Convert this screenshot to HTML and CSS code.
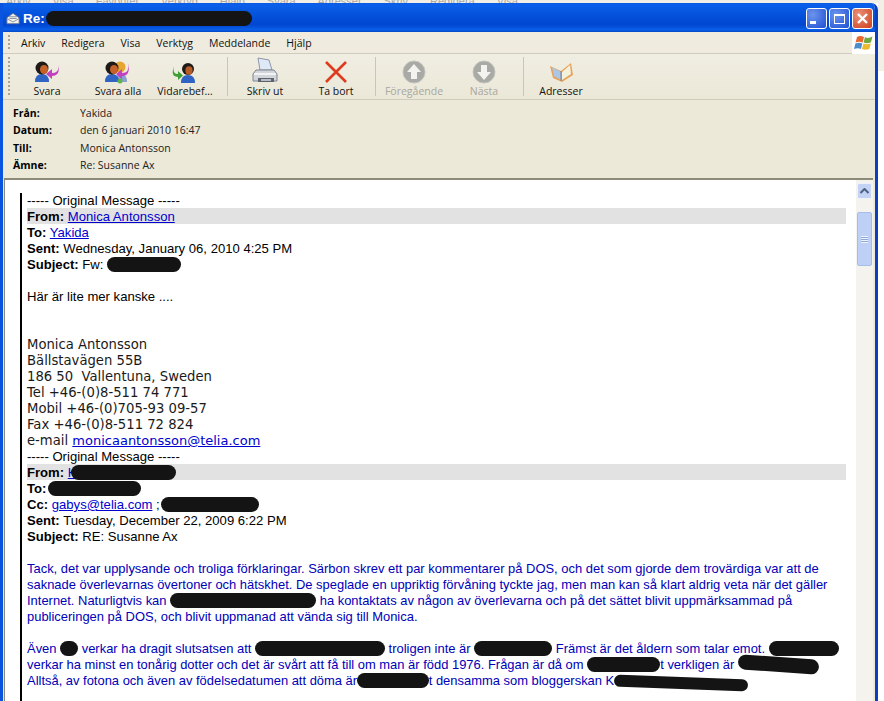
FILE: index.html
```html
<!DOCTYPE html>
<html>
<head>
    <meta charset="utf-8">
    <title>Re: Susanne Ax</title>
    <link rel="stylesheet" href="styles.css">
</head>
<body>
    <div class="behind">
        <span>Arkiv</span><span>Visa</span><span>Favoriter</span><span>Verktyg</span><span>Hjälp</span><span>Svara</span><span>Adresser</span><span>Skriv</span><span>Redigera</span><span>Visa</span>
    </div>
    <div class="behind-side"></div>
    <div class="window">
        <div class="titlebar">
            <svg class="title-icon" width="14" height="13" viewBox="0 0 16 14">
                <path d="M1 6 L8 1 L15 6 V13 H1 Z" fill="#f4f1e6" stroke="#5c6f94"/>
                <path d="M1 7 L8 11 L15 7 M3 5 H13 M4 7 H12" fill="none" stroke="#7d8aa5"/>
            </svg>
            <span class="title-text">Re:</span>
            <span class="redact title-redact"></span>
            <div class="caption-btns">
                <div class="cap cap-min"><div class="min-glyph"></div></div>
                <div class="cap cap-max"><div class="max-glyph"></div></div>
                <div class="cap cap-close">
                    <svg width="13" height="13" viewBox="0 0 13 13"><path d="M2 2 L11 11 M11 2 L2 11" stroke="#fff" stroke-width="2.4"/></svg>
                </div>
            </div>
        </div>

        <div class="menubar">
            <div class="grip"></div>
            <span class="menu-item">Arkiv</span>
            <span class="menu-item">Redigera</span>
            <span class="menu-item">Visa</span>
            <span class="menu-item">Verktyg</span>
            <span class="menu-item">Meddelande</span>
            <span class="menu-item">Hjälp</span>
            <div class="flag">
                <svg width="20" height="18" viewBox="0 0 20 18">
                    <path d="M3 3 Q6 1 10 3 L8.6 8.5 Q5 7 1.6 8.5 Z" fill="#e8672c"/>
                    <path d="M11 3 Q14 5 18.5 2.5 L17 8.2 Q13 10 9.6 8.5 Z" fill="#72a83e"/>
                    <path d="M1.4 9.5 Q5 8 8.3 9.5 L7 15 Q4 13.5 0 15 Z" fill="#4d8ccb"/>
                    <path d="M9.4 9.5 Q13 11 16.8 9.2 L15.4 15 Q11 16.5 8 15 Z" fill="#edb92e"/>
                </svg>
            </div>
        </div>

        <div class="toolbar">
            <div class="grip"></div>
            <div class="tool tool-svara">
                <svg width="26" height="24" viewBox="0 0 26 24">
                    <path d="M1 22 Q1 14 8 14 Q15 14 15 22 Z" fill="#2f63c4"/>
                    <circle cx="8" cy="8" r="6.5" fill="#1d1a18"/>
                    <ellipse cx="10" cy="9.5" rx="4" ry="4.6" fill="#c4622a"/>
                    <path d="M24 4 Q26 13 18 13 V9 L12 14 L18 19 V16 Q27 16 24 4 Z" fill="#c23fc0"/>
                </svg>
                <span>Svara</span>
            </div>
            <div class="tool tool-alla">
                <svg width="26" height="24" viewBox="0 0 26 24">
                    <circle cx="15" cy="7" r="5.5" fill="#e9a531"/>
                    <path d="M10 22 Q10 14 16 14 Q22 14 22 22 Z" fill="#8b9ed0"/>
                    <path d="M0 22 Q0 14 7 14 Q14 14 14 22 Z" fill="#2f63c4"/>
                    <circle cx="7" cy="8" r="6.5" fill="#1d1a18"/>
                    <ellipse cx="9" cy="9.5" rx="4" ry="4.6" fill="#c4622a"/>
                    <path d="M23 3 Q25 13 17 13 V9 L11 14 L17 19 V16 Q26 16 23 3 Z" fill="#c23fc0"/>
                    <circle cx="15" cy="21" r="2.5" fill="#5cb54a"/>
                </svg>
                <span>Svara alla</span>
            </div>
            <div class="tool tool-vidare">
                <svg width="26" height="24" viewBox="0 0 26 24">
                    <path d="M9 23 Q9 15 16 15 Q23 15 23 23 Z" fill="#2f63c4"/>
                    <circle cx="16" cy="9" r="6" fill="#1d1a18"/>
                    <ellipse cx="17" cy="10.5" rx="3.6" ry="4.2" fill="#b85c28"/>
                    <path d="M2 6 Q0 14 6 14 V11 L11 15.5 L6 20 V17 Q-2 17 2 6 Z" fill="#3f9e35"/>
                </svg>
                <span>Vidarebef…</span>
            </div>
            <div class="tool-sep sep-a"></div>
            <div class="tool tool-skriv">
                <svg width="26" height="27" viewBox="0 0 26 27">
                    <path d="M6 1 L17 3 L20 13 L8 13 Z" fill="#dfe8f6" stroke="#8d97a6"/>
                    <path d="M4 13 H22 L25 17 V24 H1 V17 Z" fill="#d2d5da" stroke="#808792"/>
                    <path d="M2 17 H24" stroke="#f2f3f5" stroke-width="2"/>
                    <path d="M6 21 H22 V25 H6 Z" fill="#5d6470"/>
                    <path d="M9 22 H19 V24 H9 Z" fill="#b9bdc4"/>
                </svg>
                <span>Skriv ut</span>
            </div>
            <div class="tool tool-bort">
                <svg width="24" height="24" viewBox="0 0 24 24">
                    <path d="M2 2 L22 22 M22 2 L2 22" stroke="#df3b1d" stroke-width="2.6" fill="none"/>
                </svg>
                <span>Ta bort</span>
            </div>
            <div class="tool-sep sep-b"></div>
            <div class="tool tool-prev disabled">
                <svg width="24" height="24" viewBox="0 0 24 24">
                    <circle cx="12" cy="12" r="11" fill="#a9a9a5" stroke="#c3c3bf"/>
                    <path d="M12 4 L19 12 H15 V19 H9 V12 H5 Z" fill="#f3f3ef"/>
                </svg>
                <span>Föregående</span>
            </div>
            <div class="tool tool-next disabled">
                <svg width="24" height="24" viewBox="0 0 24 24">
                    <circle cx="12" cy="12" r="11" fill="#a9a9a5" stroke="#c3c3bf"/>
                    <path d="M12 20 L19 12 H15 V5 H9 V12 H5 Z" fill="#f3f3ef"/>
                </svg>
                <span>Nästa</span>
            </div>
            <div class="tool-sep sep-c"></div>
            <div class="tool tool-adr">
                <svg width="26" height="22" viewBox="0 0 26 22">
                    <path d="M2 4 L13 9 L23 1 L25 13 L14 20 L5 16 Z" fill="#e8a25a"/>
                    <path d="M4 5 L13 10 L13 18 L6 14 Z" fill="#a9c7e6"/>
                    <path d="M14 10 L22 3 L23 12 L14 18 Z" fill="#f3f1dc"/>
                    <path d="M13 9 V19" stroke="#7e7e90"/>
                </svg>
                <span>Adresser</span>
            </div>
        </div>

        <div class="msg-head">
            <div class="head-row"><b>Från:</b><span>Yakida</span></div>
            <div class="head-row"><b>Datum:</b><span>den 6 januari 2010 16:47</span></div>
            <div class="head-row"><b>Till:</b><span>Monica Antonsson</span></div>
            <div class="head-row"><b>Ämne:</b><span>Re: Susanne Ax</span></div>
        </div>

        <div class="msg-pane">
            <div class="msg-body">
                <div class="quote">
                    <div>----- Original Message -----</div>
                    <div class="hl"><b>From:</b> <a>Monica Antonsson</a></div>
                    <div><b>To:</b> <a>Yakida</a></div>
                    <div><b>Sent:</b> Wednesday, January 06, 2010 4:25 PM</div>
                    <div><b>Subject:</b> Fw: S<span class="redact r-subject"></span></div>
                    <div class="gap"></div>
                    <div>Här är lite mer kanske ....</div>
                    <div class="gap"></div>
                    <div class="gap"></div>
                    <div class="sig">Monica Antonsson</div>
                    <div class="sig">Bällstavägen 55B</div>
                    <div class="sig">186 50&nbsp; Vallentuna, Sweden</div>
                    <div class="sig">Tel +46-(0)8-511 74 771</div>
                    <div class="sig">Mobil +46-(0)705-93 09-57</div>
                    <div class="sig">Fax +46-(0)8-511 72 824</div>
                    <div class="sig">e-mail <a>monicaantonsson@telia.com</a></div>
                    <div>----- Original Message -----</div>
                    <div class="hl"><b>From:</b> <a>K</a><span class="redact r-from"></span></div>
                    <div><b>To:</b><span class="redact r-to"></span></div>
                    <div><b>Cc:</b> <a>gabys@telia.com</a> ;<span class="redact r-cc"></span></div>
                    <div><b>Sent:</b> Tuesday, December 22, 2009 6:22 PM</div>
                    <div><b>Subject:</b> RE: Susanne Ax</div>
                    <div class="gap"></div>
                    <div class="blue">Tack, det var upplysande och troliga förklaringar. Särbon skrev ett par kommentarer på DOS, och det som gjorde dem trovärdiga var att de</div>
                    <div class="blue">saknade överlevarnas övertoner och hätskhet. De speglade en uppriktig förvåning tyckte jag, men man kan så klart aldrig veta när det gäller</div>
                    <div class="blue">Internet. Naturligtvis kan <span class="redact r-b1"></span> ha kontaktats av någon av överlevarna och på det sättet blivit uppmärksammad på</div>
                    <div class="blue">publiceringen på DOS, och blivit uppmanad att vända sig till Monica.</div>
                    <div class="gap"></div>
                    <div class="blue">Även <span class="redact r-b2"></span> verkar ha dragit slutsatsen att <span class="redact r-b3"></span> troligen inte är <span class="redact r-b4"></span> Främst är det åldern som talar emot. <span class="redact r-b5"></span></div>
                    <div class="blue">verkar ha minst en tonårig dotter och det är svårt att få till om man är född 1976. Frågan är då om <span class="redact r-b6"></span>t verkligen är <span class="redact r-b7"></span></div>
                    <div class="blue">Alltså, av fotona och även av födelsedatumen att döma är <span class="redact r-b8"></span>t densamma som bloggerskan K<span class="redact r-b9"></span></div>
                </div>
            </div>
            <div class="scrollbar">
                <div class="sb-btn">
                    <svg width="9" height="6" viewBox="0 0 9 6"><path d="M0.5 5 L4.5 1 L8.5 5" fill="none" stroke="#4d6185" stroke-width="2"/></svg>
                </div>
                <div class="sb-thumb"><div class="sb-lines"></div></div>
            </div>
        </div>
    </div>
</body>
</html>
```

FILE: styles.css
```css
html, body {
    margin: 0;
    padding: 0;
    height: 701px;
    overflow: hidden;
    background: #ffffff;
}

body {
    font-family: "Liberation Sans", Arial, sans-serif;
    position: relative;
}

/* the other window, mostly cut off above this one */
.behind {
    height: 3px;
    overflow: hidden;
    background: #f1efe6;
    font-size: 11px;
    line-height: 3px;
    color: #a9a9a4;
    padding-left: 6px;
    display: flex;
    gap: 22px;
}

.behind-side {
    position: absolute;
    top: 3px;
    right: 0;
    width: 6px;
    height: 68px;
    background: #f1efe6;
}

.window {
    width: 878px;
    height: 698px;
    display: flex;
    flex-direction: column;
    box-sizing: border-box;
    position: relative;
    background: #ece9d8;
    border-left: 3px solid #0a55e0;
    border-right: 3px solid #0a3fc0;
    border-top-right-radius: 7px;
    overflow: hidden;
}

.titlebar {
    height: 29px;
    flex: none;
    box-sizing: border-box;
    margin: 0 -3px;
    padding: 2px 0 0 6px;
    display: flex;
    align-items: center;
    background: linear-gradient(#0a5ae6 0%, #0a5fe8 8%, #0553dc 40%, #0046d0 75%, #0a5fe8 92%, #0348c8 100%);
    color: #fff;
    font-weight: bold;
    font-size: 13.5px;
}

.title-icon {
    margin-right: 3px;
}

.title-redact {
    width: 206px;
    height: 14px;
    margin-left: 1px;
}

.caption-btns {
    margin-left: auto;
    margin-right: 5px;
    display: flex;
    gap: 2px;
}

.cap {
    width: 19px;
    height: 19px;
    border: 1px solid #fff;
    border-radius: 3px;
    background: radial-gradient(circle at 30% 30%, #6c94ec, #1e50d4);
    display: flex;
    align-items: center;
    justify-content: center;
}

.cap-close {
    background: radial-gradient(circle at 30% 30%, #ea9078, #cf3f1c);
}

.min-glyph {
    width: 6px;
    height: 3px;
    background: #fff;
    align-self: flex-end;
    margin: 0 7px 4px 0;
}

.max-glyph {
    width: 9px;
    height: 7px;
    border: 1px solid #fff;
    border-top-width: 2px;
}

.menubar {
    height: 22px;
    flex: none;
    position: relative;
    display: flex;
    align-items: center;
    box-sizing: border-box;
    padding-left: 5px;
    background: #efecdf;
    border-bottom: 1px solid #cfccbd;
    font-family: "Open Sans", sans-serif;
    font-size: 10.5px;
    color: #111;
}

.grip {
    width: 2px;
    align-self: stretch;
    margin: 3px 0;
    background: repeating-linear-gradient(#a8a596 0 2px, transparent 2px 4px);
}

.menu-item {
    margin-left: 16px;
}

.menu-item:first-of-type {
    margin-left: 11px;
}

.flag {
    position: absolute;
    right: 0;
    top: 0;
    width: 23px;
    height: 22px;
    background: #fff;
    display: flex;
    align-items: center;
    justify-content: center;
}

.toolbar {
    height: 46px;
    flex: none;
    display: flex;
    box-sizing: border-box;
    padding-left: 5px;
    background: linear-gradient(#f0eee2, #ebe8d8);
    border-bottom: 1px solid #cfccbd;
    font-family: "Open Sans", sans-serif;
    font-size: 10.5px;
    color: #111;
}

.tool {
    display: flex;
    flex-direction: column;
    align-items: center;
    justify-content: flex-end;
    padding-bottom: 1px;
    white-space: nowrap;
}

.tool-svara { width: 70px; margin-left: 2px; }
.tool-alla { width: 72px; }
.tool-vidare { width: 62px; }
.tool-skriv { width: 74px; }
.tool-bort { width: 68px; }
.tool-prev { width: 76px; }
.tool-next { width: 64px; }
.tool-adr { width: 74px; }

.tool-sep {
    width: 1px;
    margin: 3px 0;
    background: #c9c6b6;
}

.sep-a { margin-left: 11px; }
.sep-b { margin-left: 5px; }
.sep-c { margin-left: 7px; }

.disabled {
    color: #a8a79f;
}

.msg-head {
    height: 78px;
    flex: none;
    box-sizing: border-box;
    padding: 5px 0 0 10px;
    background: #ece9d8;
    font-family: "Open Sans", sans-serif;
    font-size: 10.5px;
    color: #222;
}

.head-row {
    display: flex;
    height: 17.3px;
    line-height: 17px;
}

.head-row b {
    width: 67px;
    color: #000;
}

.msg-pane {
    flex: 1;
    min-height: 0;
    display: flex;
    margin: 0 2px 0 1px;
    background: #fff;
    border-top: 2px solid #8c8a78;
    border-left: 1px solid #8c8a78;
}

.msg-body {
    flex: 1;
    min-width: 0;
    padding: 13px 10px 0 15px;
    overflow: hidden;
}

.quote {
    height: 100%;
    border-left: 2px solid #000;
    padding-left: 5px;
    font-size: 13.1px;
    line-height: 16px;
    color: #000;
    white-space: nowrap;
}

.quote a {
    color: #0000d0;
    text-decoration: underline;
}

/* grey band sits a pixel above its text */
.hl {
    margin-top: -1px;
    padding-top: 1px;
    background: linear-gradient(#e2e2e2, #e2e2e2) 0 0 / 100% 16px no-repeat;
}

.gap {
    height: 16px;
}

.sig {
    font-family: "DejaVu Sans", Verdana, sans-serif;
    font-size: 13.2px;
    color: #1a1a1a;
}

.sig a {
    font-size: 13px;
}

.blue {
    font-size: 12.95px;
    color: #0000b8;
}

.redact {
    display: inline-block;
    height: 15px;
    background: #141414;
    border-radius: 8px;
    vertical-align: -3px;
}

.r-subject { width: 74px; margin-left: -9px; }
.r-from { width: 105px; margin-left: -5px; }
.r-to { width: 93px; margin-left: 2px; }
.r-cc { width: 98px; margin-left: 1px; }
.r-b1 { width: 146px; }
.r-b2 { width: 18px; }
.r-b3 { width: 130px; }
.r-b4 { width: 78px; }
.r-b5 { width: 70px; }
.r-b6 { width: 73px; }
.r-b7 { width: 81px; transform: rotate(4deg); }
.r-b8 { width: 72px; margin-left: -4px; }
.r-b9 { width: 134px; height: 12px; vertical-align: -4px; transform: rotate(2deg); }

.scrollbar {
    width: 17px;
    flex: none;
    background: #f4f3ee;
    padding: 3px 1px 0;
    box-sizing: border-box;
}

.sb-btn {
    height: 14px;
    background: #c4d3f5;
    border-radius: 2px;
    border: 1px solid #eef2fb;
    display: flex;
    align-items: center;
    justify-content: center;
}

.sb-thumb {
    height: 54px;
    margin-top: 13px;
    background: #bed0f6;
    border: 1px solid #a6bcec;
    border-radius: 2px;
    box-sizing: border-box;
    display: flex;
    align-items: center;
    justify-content: center;
}

.sb-lines {
    width: 7px;
    height: 7px;
    background: repeating-linear-gradient(#eef3fd 0 1px, #8ea8dc 1px 2px);
}
```
